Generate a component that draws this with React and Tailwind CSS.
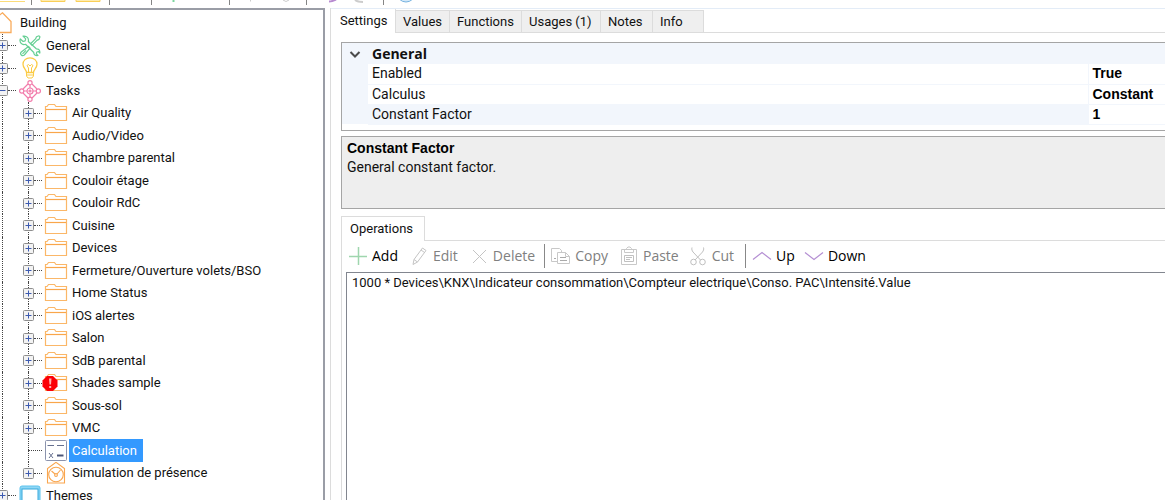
import React from "react";

function FolderIcon({ alert }) {
  return (
    <svg width="22" height="22" viewBox="0 0 22 22" fill="none" stroke="#fbb768" strokeWidth="1.2" className="overflow-visible">
      <path d="M.5 18.5v-14h1.5l1.5-2h6l1.5 2h10.5v14z" />
      <path d="M1 7.5h20" stroke="#f9a64a" />
      {alert && (
        <g stroke="none">
          <path d="M2 4h6l4.500 4.500v6L8 19H2l-4.500-4.500v-6z" fill="#fb0007" />
          <path d="M4 6.500h2.500l-.5 6H4.500zM4.200 14h2v2h-2z" fill="#ffb3b3" />
        </g>
      )}
    </svg>
  );
}

function HouseIcon() {
  return (
    <svg width="22" height="22" viewBox="0 0 22 22" fill="none" stroke="#f9ab5b" strokeWidth="1.3">
      <path d="M1 20.500V9.500L12.500.8 21 9.500v11z" />
    </svg>
  );
}

function ToolsIcon() {
  return (
    <svg width="22" height="22" viewBox="0 0 22 22" fill="none" stroke="#66cf94" strokeWidth="1.2" strokeLinejoin="round">
      <path d="M4 1.200l2.700 2.700-.6 2-2 .6L1.300 4C.6 6 1.300 8 3 9c1.300.8 2.500.6 3.500.3l8.300 8.200c-.2 2 1.700 3.600 4.200 3l-1.700-1.700.5-1.800 1.700-.5 1.300 1.500c.4-2.500-1-4.300-3.500-4.200L9.300 6.500C10 3.500 8 .5 4 1.200z" />
      <path d="M11.500 8.700l5-4.800 1-2.200 2.500-.9 1 1-1 2.600-2.100 1-4.800 5zM9.500 11.500L2.300 17c-1 1-1 2 0 3s2 .8 3 0l5.800-6.800zM3.500 18.800l3.500-3.500" />
    </svg>
  );
}

function BulbIcon() {
  return (
    <svg width="22" height="22" viewBox="0 0 22 22" fill="none" stroke="#fbcb45" strokeWidth="1.3">
      <path d="M7.500 15.500c0-3-3.500-4-3.500-8.200C4 3.500 7 .8 11 .8s7 2.700 7 6.500c0 4.200-3.500 5.200-3.500 8.200z" />
      <path d="M7.500 15.500v3.500l1.500 2h4l1.500-2v-3.500M7.500 18h7M9.500 15.500V11L8 8.500l1.500-1 1.500 1.500 1.500-1.500 1.500 1L12.500 11v4.500" strokeWidth="1" />
    </svg>
  );
}

function TasksIcon() {
  return (
    <svg width="22" height="22" viewBox="0 0 22 22" fill="none" stroke="#f27cab" strokeWidth="1.200">
      <path d="M9 4L4 9M13 4l5 5M9 18l-5-5M13 18l5-5M11 5v3M11 14v3M5 11h3M14 11h3" />
      <circle cx="11" cy="11" r="3" />
      <circle cx="11" cy="11" r="1" />
      <circle cx="11" cy="2.700" r="2.100" />
      <circle cx="11" cy="19.300" r="2.100" />
      <circle cx="2.700" cy="11" r="2.100" />
      <circle cx="19.300" cy="11" r="2.100" />
    </svg>
  );
}

function CalcIcon() {
  return (
    <svg width="22" height="22" viewBox="0 0 22 22" fill="none" stroke="#8b93ad">
      <rect x=".5" y=".5" width="21" height="20" rx="1" fill="#fff" />
      <path d="M2.500 5.500h6.500M12 5.500h7" stroke="#66708f" />
      <path d="M4 13l4 5M8 13l-4 5" stroke="#66708f" />
      <path d="M12 15.500h6.500" stroke="#4c5678" strokeWidth="2" />
    </svg>
  );
}

function ClockHouseIcon() {
  return (
    <svg width="22" height="22" viewBox="0 0 22 22" fill="none" stroke="#f9a64f" strokeWidth="1.100">
      <path d="M2.500 21V6.500L11 .3l8.500 6.200V21z" />
      <circle cx="11" cy="12.500" r="7.300" />
      <circle cx="11" cy="13" r="1.400" />
      <path d="M10 12L6.500 9M12 12l3.500-4" />
    </svg>
  );
}

function ThemesIcon() {
  return (
    <svg width="22" height="22" viewBox="0 0 22 22" fill="none">
      <path d="M1 22V3q0-2 2-2h16q2 0 2 2v19" fill="#8fd6f5" stroke="#5cc3ee" strokeWidth="1" />
      <rect x="3" y="4" width="16" height="12" fill="#fff" stroke="#35a8dc" />
      <path d="M3 19h16" stroke="#c9ecfa" strokeWidth="2" />
    </svg>
  );
}

const ROWS = [
  { level: 1, label: "General", icon: <ToolsIcon />, sign: "+" },
  { level: 1, label: "Devices", icon: <BulbIcon />, sign: "+" },
  { level: 1, label: "Tasks", icon: <TasksIcon />, sign: "-" },
  ...[
    "Air Quality",
    "Audio/Video",
    "Chambre parental",
    "Couloir étage",
    "Couloir RdC",
    "Cuisine",
    "Devices",
    "Fermeture/Ouverture volets/BSO",
    "Home Status",
    "iOS alertes",
    "Salon",
    "SdB parental",
    "Shades sample",
    "Sous-sol",
    "VMC",
  ].map((label) => ({
    level: 2,
    label,
    icon: <FolderIcon alert={label === "Shades sample"} />,
    sign: "+",
  })),
  { level: 2, label: "Calculation", icon: <CalcIcon />, selected: true },
  { level: 2, label: "Simulation de présence", icon: <ClockHouseIcon />, sign: "+", last: true },
  { level: 1, label: "Themes", icon: <ThemesIcon />, sign: "+" },
];

function Expander({ sign, label }) {
  return (
    <button type="button" aria-label={(sign === "+" ? "Expand " : "Collapse ") + label} className="relative">
      <svg width="11" height="11" viewBox="0 0 11 11" fill="none">
        <rect x=".5" y=".5" width="10" height="10" rx="1" fill="#f3f3f3" stroke="#8e8e8e" />
        <path d={sign === "+" ? "M2.500 5.500h6M5.500 2.500v6" : "M2.500 5.500h6"} stroke="#3c5ab0" />
      </svg>
    </button>
  );
}

function TreeRow({ level, label, icon, sign, selected, last }) {
  return (
    <li className="flex items-stretch odd:h-[22px] even:h-[23px]">
      {level === 2 && (
        <span className="w-[19px] shrink-0 pl-[2px]">
          <span className="block h-full border-l border-dotted border-[#444]" />
        </span>
      )}
      <span className={"relative flex shrink-0 items-center " + (level === 2 ? "w-[26px] pl-1" : "-ml-[3px] w-[22px]")}>
        <span
          className={
            "absolute top-0 border-l border-dotted border-[#444] " +
            (level === 2 ? "left-[9px] " : "left-[5px] ") +
            (last ? "h-1/2" : "h-full")
          }
        />
        {sign ? <Expander sign={sign} label={label} /> : <span className="w-[5px]" />}
        <span className={"border-t border-dotted border-[#444] " + (sign ? "w-2" : "w-[14px]")} />
      </span>
      <span className="flex w-[22px] shrink-0 items-center">{icon}</span>
      <span
        className={
          "ml-[2px] flex items-center whitespace-nowrap pr-[6px] pl-[3px] " +
          (selected ? "bg-[#3399ff] text-white" : "")
        }
      >
        {label}
      </span>
    </li>
  );
}

function TopToolbar() {
  return (
    <div className="h-2 shrink-0 overflow-hidden">
      <svg width="420" height="8" viewBox="0 0 420 8" fill="none">
        <path d="M0 1.500h25" stroke="#fbdc7a" />
        <path d="M41 0v1.500h24V0M76 0v1.500h24V0" fill="#fdebb0" stroke="#f9cf58" />
        <path d="M31.500 0v5M109.500 0v5M151.500 0v5M229.500 0v5M306.500 0v5M383.500 0v5" stroke="#858585" />
        <path d="M173.500 0v2" stroke="#7fd6a0" strokeWidth="2" />
        <path d="M250.500 0v1.500M283 0l3 1.500L289 0" stroke="#ccc" />
        <path d="M329 1.500c3 0 5-1 7-2" stroke="#b78ad0" strokeWidth="2" />
        <path d="M355 0c2 1.500 5 2 8 2" stroke="#ccc" strokeWidth="2" />
        <circle cx="406" cy="-7" r="9" fill="#d4e9f9" stroke="#77b3e0" />
      </svg>
    </div>
  );
}

const TABS = [
  ["Values", "w-[54px]"],
  ["Functions", "w-[72px]"],
  ["Usages (1)", "w-[79px]"],
  ["Notes", "w-[52px]"],
  ["Info", "w-[51px]"],
];

function SettingsTabs() {
  return (
    <div role="tablist" className="flex h-[25px] items-end border-t border-[#e3ecf7]">
      <button type="button" role="tab" aria-selected="true" className="h-6 w-[65px] border-r border-[#dcdcdc] pl-[9px] text-left leading-[22px]">
        Settings
      </button>
      {TABS.map(([name, width]) => (
        <button
          key={name}
          type="button"
          role="tab"
          aria-selected="false"
          className={"h-[23px] border-y border-r border-[#dcdcdc] bg-[#efefef] pl-[7px] text-left " + width}
        >
          {name}
        </button>
      ))}
      <span className="h-px flex-1 bg-[#dcdcdc]" />
    </div>
  );
}

const PROPS = [
  ["Enabled", "True"],
  ["Calculus", "Constant"],
  ["Constant Factor", "1"],
];

function PropertyGrid() {
  return (
    <div className="border border-r-0 border-[#a5a5a5] pb-[5px] text-sm">
      <table className="w-full border-collapse text-left">
        <thead>
          <tr className="h-[21px] bg-[#f2f6fc]">
            <th className="w-[26px] p-0">
              <button type="button" aria-label="Collapse General" className="block pl-[7px]">
                <svg width="12" height="12" viewBox="0 0 12 12" fill="none" stroke="#4b4b4b" strokeWidth="2">
                  <path d="M1.500 4L6 8.500 10.500 4" />
                </svg>
              </button>
            </th>
            <th colSpan="2" className="p-0 pl-1 font-['Open_Sans',sans-serif] leading-5 font-bold">
              General
            </th>
          </tr>
        </thead>
        <tbody>
          {PROPS.map(([name, value]) => {
            const active = name === "Constant Factor";
            return (
              <tr key={name} className="h-5">
                <td className="bg-[#f2f6fc] p-0" />
                <td className={"border-b border-[#f2f6fc] p-0 pl-1 leading-[19px] " + (active ? "bg-[#f2f6fc]" : "")}>{name}</td>
                <td className="w-[77px] border-b border-l border-[#f2f6fc] p-0 pl-1 font-['Liberation_Sans',sans-serif] leading-[19px] font-bold text-black">
                  {value}
                </td>
              </tr>
            );
          })}
        </tbody>
      </table>
    </div>
  );
}

function ToolButton({ label, icon, disabled, className = "" }) {
  return (
    <button type="button" disabled={disabled} className={"flex items-center gap-1 " + (disabled ? "text-[#808080] " : "text-black ") + className}>
      {icon}
      {label}
    </button>
  );
}

function Glyph({ stroke, children }) {
  return (
    <svg width="20" height="20" viewBox="0 0 20 20" fill="none" stroke={stroke} className="shrink-0">
      {children}
    </svg>
  );
}

function OperationsToolbar() {
  return (
    <div role="toolbar" className="flex h-[31px] items-center pl-[6px] font-['Open_Sans',sans-serif] text-sm">
      <ToolButton label="Add" icon={<Glyph stroke="#9fd6ae"><path d="M1 10.500h18M10.500 1v18" strokeWidth="1.500" /></Glyph>} />
      <ToolButton
        disabled
        className="ml-[11px]"
        label="Edit"
        icon={<Glyph stroke="#c4c4c4"><path d="M4 18.500l1-5L13.500 2l3.500 2.500L8.500 16zM12 4l3.500 2.500M5 13.500L8.500 16" /></Glyph>}
      />
      <ToolButton
        disabled
        className="ml-[11px]"
        label="Delete"
        icon={<Glyph stroke="#c4c4c4"><path d="M4 4l13 13M17 4L4 17" /></Glyph>}
      />
      <span className="ml-[9px] h-6 w-px bg-[#888]" />
      <ToolButton
        disabled
        className="ml-[6px]"
        label="Copy"
        icon={
          <Glyph stroke="#c8c8c8">
            <path d="M6.500 15.500h-6v-13h8l2 2v2M6.500 17.500v-11h8l4 4v7zM14.500 6.500v4h4" />
            <path d="M9 11.500h6M9 14.500h7M3 12.500h2" stroke="#aaa" />
          </Glyph>
        }
      />
      <ToolButton
        disabled
        className="ml-[11px]"
        label="Paste"
        icon={
          <Glyph stroke="#c8c8c8">
            <path d="M2.500 3.500h15v15h-15zM5.500 3.500v3h9v-3M7.500 3.500v-1l1.500-1.500h2l1.500 1.500v1" />
            <path d="M5.500 9.500h9v6h-9zM7 11.500h6M7 13.500h4" stroke="#c0c0c0" />
          </Glyph>
        }
      />
      <ToolButton
        disabled
        className="ml-[9px]"
        label="Cut"
        icon={
          <Glyph stroke="#c0c0c0">
            <path d="M4 1.500c-.5 2 0 3 1 4.500l7.500 8M15.500 1.500c.5 2 0 3-1 4.500L7 14" />
            <circle cx="5.500" cy="16" r="2.800" />
            <circle cx="14.500" cy="16" r="2.800" />
          </Glyph>
        }
      />
      <span className="ml-[11px] h-6 w-px bg-[#888]" />
      <ToolButton className="ml-[6px]" label="Up" icon={<Glyph stroke="#b48fd3"><path d="M1 13.500l9-7 9 7" strokeWidth="1.200" /></Glyph>} />
      <ToolButton className="ml-[9px]" label="Down" icon={<Glyph stroke="#b48fd3"><path d="M1 6.500l9 7 9-7" strokeWidth="1.200" /></Glyph>} />
    </div>
  );
}

export default function App() {
  return (
    <div className="flex h-screen flex-col overflow-hidden bg-white font-[Roboto,sans-serif] text-[13px] text-[#111]">
      <TopToolbar />
      <div className="flex min-h-0 flex-1">
        <nav aria-label="Project" className="w-[325px] shrink-0 overflow-hidden border-t-2 border-r-2 border-[#9a9da6] pt-[2px]">
          <ul>
            <li className="flex items-center odd:h-[22px] even:h-[23px]">
              <span className="-ml-[10px]">
                <HouseIcon />
              </span>
              <span className="ml-2">Building</span>
            </li>
            {ROWS.map((row) => (
              <TreeRow key={row.level + row.label} {...row} />
            ))}
          </ul>
        </nav>
        <main className="ml-[5px] flex min-w-0 flex-1 flex-col border-l border-[#dcdcdc]">
          <SettingsTabs />
          <section className="flex min-h-0 flex-1 flex-col pt-[9px] pl-[10px]">
            <PropertyGrid />
            <div className="mt-[5px] h-[73px] shrink-0 border border-r-0 border-[#a5a5a5] bg-[#eee] pt-[2px] pl-[5px] text-sm leading-[19px]">
              <h2 className="font-['Liberation_Sans',sans-serif] font-bold text-black">Constant Factor</h2>
              <p>General constant factor.</p>
            </div>
            <div role="tablist" className="mt-[7px] flex h-[25px] shrink-0 items-end">
              <button type="button" role="tab" aria-selected="true" className="h-full w-[84px] border-x border-t border-[#dcdcdc] pl-2 text-left">
                Operations
              </button>
              <span className="h-px flex-1 bg-[#dcdcdc]" />
            </div>
            <div className="flex min-h-0 flex-1 flex-col border-l border-[#dcdcdc]">
              <OperationsToolbar />
              <ul className="ml-1 flex-1 border-t border-l border-[#82868f] pl-[5px] whitespace-nowrap">
                <li className="leading-5">1000 * Devices\KNX\Indicateur consommation\Compteur electrique\Conso. PAC\Intensité.Value</li>
              </ul>
            </div>
          </section>
        </main>
      </div>
    </div>
  );
}
